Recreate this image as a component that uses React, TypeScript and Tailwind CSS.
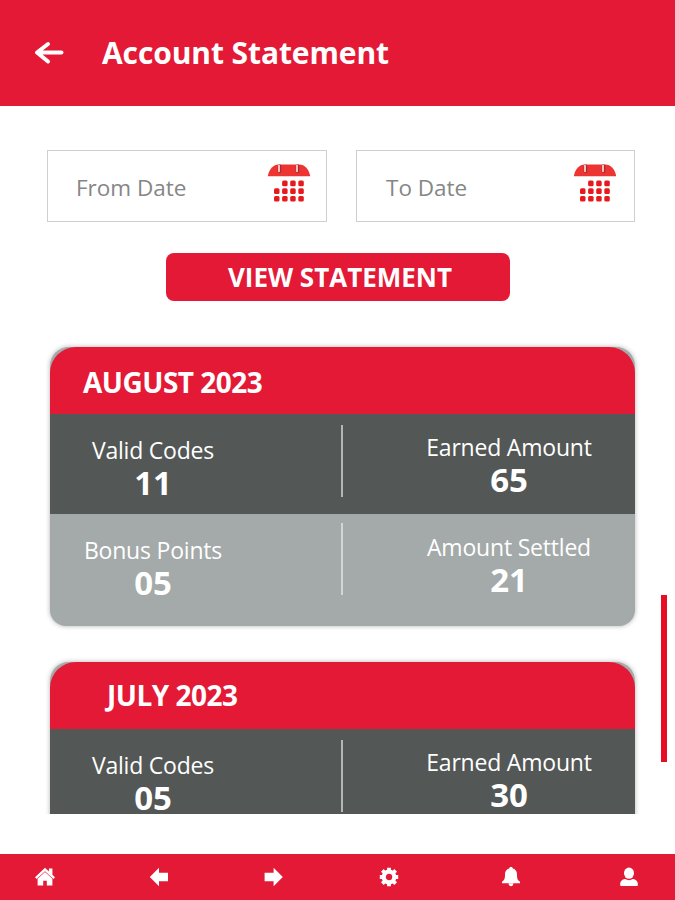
import clsx from "clsx";

interface Stat {
  label: string;
  value: string;
}

interface Statement {
  month: string;
  titleClass: string;
  codes: Stat;
  earned: Stat;
  bonus?: Stat;
  settled?: Stat;
}

const STATEMENTS: Statement[] = [
  {
    month: "AUGUST 2023",
    titleClass: "pl-[33px] pt-[3px]",
    codes: { label: "Valid Codes", value: "11" },
    earned: { label: "Earned Amount", value: "65" },
    bonus: { label: "Bonus Points", value: "05" },
    settled: { label: "Amount Settled", value: "21" },
  },
  {
    month: "JULY 2023",
    titleClass: "pl-[57px] pb-[1px]",
    codes: { label: "Valid Codes", value: "05" },
    earned: { label: "Earned Amount", value: "30" },
  },
];

// dots of the calendar, the first cell of the top row stays empty
const DOTS = [
  [1, 0], [2, 0], [3, 0],
  [0, 1], [1, 1], [2, 1], [3, 1],
  [0, 2], [1, 2], [2, 2], [3, 2],
];

const CalendarIcon = () => (
  <svg width="44" height="40" viewBox="0 0 44 40">
    <path d="M.8 13.200C2 6.500 6 1.600 12 1.600H32C38 1.600 42 6.500 43.200 13.200Z" fill="#ee3432" />
    <path d="M12.500 3V8.500M30.500 3V8.500" stroke="#b3282a" strokeWidth="3.600" strokeLinecap="round" />
    <path d="M12 2.500V8.300M30 2.500V8.300" stroke="#f3d6d3" strokeWidth="1.800" strokeLinecap="round" />
    {DOTS.map(([x, y]) => (
      <rect
        key={`${x}-${y}`}
        x={7 + x * 8.1}
        y={17.6 + y * 7.7}
        width="5.5"
        height="5.6"
        rx="1.5"
        fill="#e8191c"
      />
    ))}
  </svg>
);

const DateField = ({ label, className }: { label: string; className: string }) => (
  <div className={clsx("flex h-[72px] justify-between border border-[#cfcfcf] bg-white", className)}>
    <span className="pt-[22px] text-[22.5px] leading-[30px] text-[#868686]">
      {label}
    </span>
    <div className="pt-[12px]">
      <CalendarIcon />
    </div>
  </div>
);

const StatCell = ({ stat, className }: { stat: Stat; className: string }) => (
  <div className={clsx("text-center text-white", className)}>
    <p className="text-[23px] leading-[28px] tracking-[-0.2px]">{stat.label}</p>
    <p className="text-[33px] font-bold leading-[38px]">{stat.value}</p>
  </div>
);

const StatementCard = ({ item }: { item: Statement }) => (
  <div className="h-[279px] shrink-0 overflow-hidden rounded-b-[16px] rounded-t-[19px] bg-[#a4a9a9] shadow-[0_0_5px_rgba(0,0,0,0.3)]">
    <div
      className={clsx(
        "flex h-[67px] items-center rounded-t-[26px] bg-[#e31935] text-[28px] font-bold tracking-[-0.5px] text-white",
        item.titleClass
      )}
    >
      {item.month}
    </div>
    <div className="flex h-[100px] bg-[#535756]">
      <StatCell stat={item.codes} className="w-[206px] pt-[22px]" />
      <div className="ml-[85px] mt-[11px] h-[72px] w-[2px] bg-[#b4b6b6]" />
      <StatCell stat={item.earned} className="ml-[40px] flex-1 pt-[19px]" />
    </div>
    {item.bonus && item.settled && (
      <div className="flex">
        <StatCell stat={item.bonus} className="w-[206px] pt-[22px]" />
        <div className="ml-[85px] mt-[9px] h-[72px] w-[2px] bg-[#d3d6d6]" />
        <StatCell stat={item.settled} className="ml-[40px] flex-1 pt-[19px]" />
      </div>
    )}
  </div>
);

const BottomNav = () => (
  <nav className="flex h-[46px] shrink-0 items-center bg-[#e31935] pl-[34px] text-white">
    <svg width="22" height="20" viewBox="0 0 22 20" fill="currentColor">
      <path d="M11 .8L1 10.200l1.500 1.700L11 4.200l8.500 7.700 1.500-1.700-2.600-2.400V1.400h-3.500v3Z" />
      <path d="M11 5L3.600 11.700V18.400h5.600v-4.600h3.600v4.600h5.600V11.700Z" />
    </svg>
    <svg className="ml-[93px]" width="20" height="20" viewBox="0 0 20 20" fill="currentColor">
      <path d="M.8 10L10 .8V5.800h9v8.400h-9v5Z" />
    </svg>
    <svg className="ml-[94px]" width="20" height="20" viewBox="0 0 20 20" fill="currentColor">
      <path d="M19.800 10L10.600 .8V5.800H1.600v8.400h9v5Z" />
    </svg>
    <svg className="ml-[96px]" width="20" height="20" viewBox="0 0 20 20">
      <circle cx="10" cy="10" r="5.300" fill="none" stroke="currentColor" strokeWidth="4.200" />
      <path
        d="M10 .8v3M10 16.200v3M.8 10h3M16.200 10h3M3.300 3.300l2.200 2.200M14.500 14.500l2.200 2.200M3.300 16.700l2.200-2.200M14.500 5.500l2.200-2.200"
        stroke="currentColor"
        strokeWidth="3.800"
      />
    </svg>
    <svg className="ml-[102px]" width="20" height="22" viewBox="0 0 20 22" fill="currentColor">
      <path d="M10 1c-1.200 0-1.800.7-1.900 1.500C5.300 3.300 4 5.600 4 8.200c0 4.200-.4 5.800-3 7.500v1.600h18v-1.600c-2.600-1.700-3-3.300-3-7.500 0-2.600-1.300-4.900-4.100-5.700C11.800 1.700 11.200 1 10 1Z" />
      <path d="M7.600 17.200h4.800c-.1 2-1 3-2.400 3s-2.300-1-2.400-3Z" />
    </svg>
    <svg className="ml-[98px]" width="20" height="20" viewBox="0 0 20 20" fill="currentColor">
      <ellipse cx="10" cy="6.200" rx="5" ry="5.600" />
      <path d="M2.600 19C1.600 19 1.100 18.400 1.100 17.400c0-3.100 1.800-4.900 5-5.400 2.400 1.500 5.400 1.500 7.800 0 3.200.5 5 2.300 5 5.400 0 1-.5 1.600-1.500 1.600Z" />
    </svg>
  </nav>
);

const App = () => {
  return (
    <div className="relative flex h-[900px] w-[675px] flex-col overflow-hidden bg-white font-['Open_Sans','Noto_Sans',sans-serif]">
      <header className="flex h-[106px] shrink-0 items-center bg-[#e31935] pl-[34px] text-white">
        <svg width="31" height="24" viewBox="0 0 31 24" fill="none">
          <path
            d="M14 3L3 11.500L14 20.500M3.500 11.500H27.500"
            stroke="currentColor"
            strokeWidth="4"
            strokeLinecap="round"
            strokeLinejoin="round"
          />
        </svg>
        <h1 className="ml-[37px] pb-[1px] text-[30px] font-bold tracking-[-0.1px]">Account Statement</h1>
      </header>

      <div className="mt-[44px] flex gap-[29px] pl-[47px]">
        <DateField label="From Date" className="w-[280px] pl-[28px] pr-[15px]" />
        <DateField label="To Date" className="w-[279px] pl-[29px] pr-[17px]" />
      </div>

      <button className="ml-[166px] mt-[31px] h-[48px] w-[344px] shrink-0 rounded-[8px] bg-[#e31935] pl-[4px] text-[26px] font-bold text-white">
        VIEW STATEMENT
      </button>

      <div className="mt-[36px] flex h-[477px] shrink-0 flex-col gap-[36px] overflow-hidden pl-[50px] pr-[40px] pt-[10px]">
        {STATEMENTS.map((item) => (
          <StatementCard key={item.month} item={item} />
        ))}
      </div>

      <div className="mt-auto">
        <BottomNav />
      </div>

      {/* scroll thumb */}
      <div className="absolute left-[661px] top-[595px] h-[167px] w-[6px] bg-[#e60d24]" />
    </div>
  );
};

export default App;
